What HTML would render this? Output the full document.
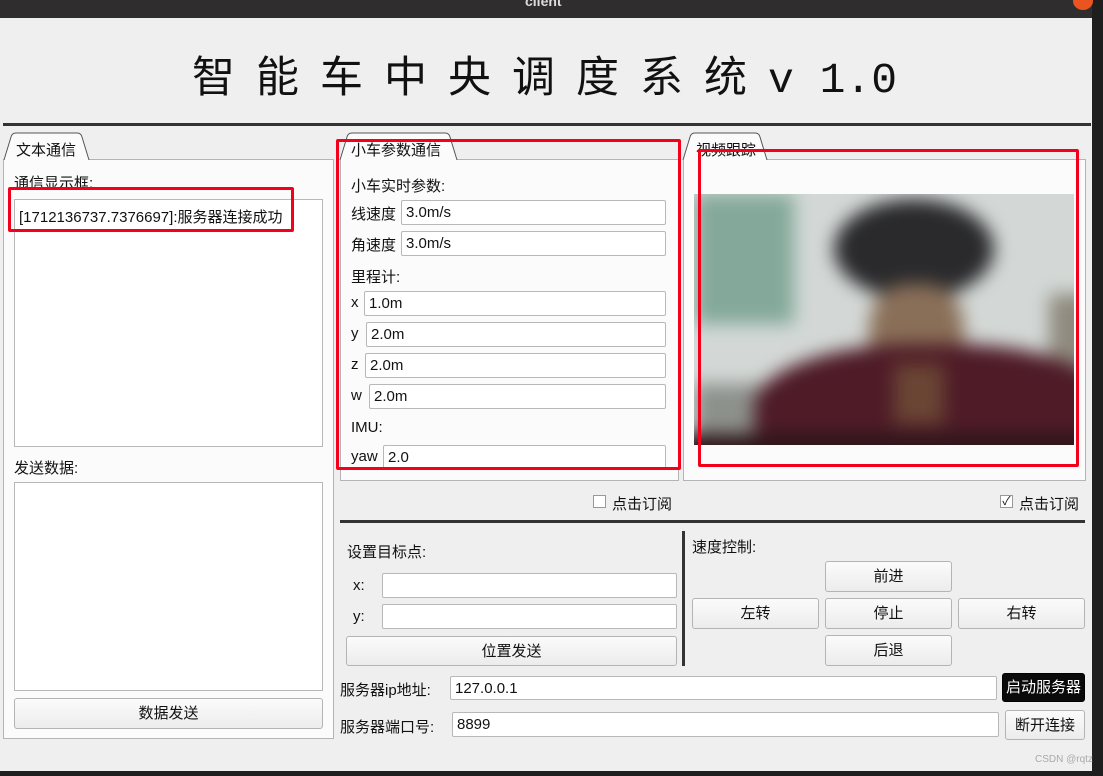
<!DOCTYPE html>
<html><head><meta charset="utf-8"><style>
*{margin:0;padding:0;box-sizing:border-box}
body{width:1103px;height:776px;background:#1e1e1e;position:relative;overflow:hidden;font-family:"Liberation Sans","Noto Sans CJK SC",sans-serif;font-size:15px;color:#111}
.a{position:absolute}
.win{left:0;top:18px;width:1092px;height:753px;background:#efefef}
.tb{left:0;top:0;width:1092px;height:18px;background:#2f2d2d}
.panel{position:absolute;background:#fbfbfb;border:1px solid #b4b4b4}
.in{position:absolute;background:#fff;border:1px solid #b8b8b8;border-radius:2px;padding-left:4px;font-size:15px;display:flex;align-items:center;line-height:1}
.box{position:absolute;background:#fff;border:1px solid #b8b8b8}
.btn{position:absolute;border:1px solid #b4b4b4;border-radius:3px;background:linear-gradient(#fbfbfb,#ececec);font-size:15px;display:flex;align-items:center;justify-content:center;line-height:1}
.lb{position:absolute;font-size:15px;white-space:nowrap}
.red{position:absolute;border:3px solid #f5001a;border-radius:2px}
.tab{position:absolute}
</style></head><body>
<div class="a tb"></div>
<div class="a" style="left:525px;top:-7px;color:#ddd;font-size:14px;font-weight:bold">client</div>
<div class="a" style="left:1073px;top:-8px;width:20px;height:18px;border-radius:50%;background:#e95420"></div>
<div class="a win"></div>
<div class="a" style="left:192px;top:46px;white-space:nowrap;line-height:56px;font-size:43px"><span style="font-family:'Noto Sans CJK SC',sans-serif;letter-spacing:21px">智能车中央调度系统</span><span style="font-family:'Liberation Mono',monospace">v 1.0</span></div>
<div class="a" style="left:3px;top:123px;width:1088px;height:3px;background:#333"></div>

<div class="panel" style="left:3px;top:159px;width:331px;height:580px"></div>
<svg class="tab" style="left:3px;top:131px" width="90" height="30"><path d="M1 29 L8 6 Q9 2 13 2 L74 2 Q78 2 79 6 L86 29" fill="#fbfbfb" stroke="#555" stroke-width="1"/></svg>
<div class="lb" style="left:16px;top:139px">文本通信</div>
<div class="lb" style="left:14px;top:172px">通信显示框:</div>
<div class="box" style="left:14px;top:199px;width:309px;height:248px"></div>
<div class="lb" style="left:19px;top:206px">[1712136737.7376697]:服务器连接成功</div>
<div class="red" style="left:8px;top:187px;width:286px;height:45px"></div>
<div class="lb" style="left:14px;top:457px">发送数据:</div>
<div class="box" style="left:14px;top:482px;width:309px;height:209px"></div>
<div class="btn" style="left:14px;top:698px;width:309px;height:31px">数据发送</div>

<div class="panel" style="left:340px;top:159px;width:339px;height:322px"></div>
<svg class="tab" style="left:339px;top:131px" width="122" height="30"><path d="M1 29 L8 6 Q9 2 13 2 L106 2 Q110 2 111 6 L118 29" fill="#fbfbfb" stroke="#555"/></svg>
<div class="lb" style="left:351px;top:139px">小车参数通信</div>
<div class="lb" style="left:351px;top:175px">小车实时参数:</div>
<div class="lb" style="left:351px;top:203px">线速度</div><div class="in" style="left:401px;top:200px;width:265px;height:25px">3.0m/s</div>
<div class="lb" style="left:351px;top:234px">角速度</div><div class="in" style="left:401px;top:231px;width:265px;height:25px">3.0m/s</div>
<div class="lb" style="left:351px;top:266px">里程计:</div>
<div class="lb" style="left:351px;top:294px">x</div><div class="in" style="left:364px;top:291px;width:302px;height:25px">1.0m</div>
<div class="lb" style="left:351px;top:325px">y</div><div class="in" style="left:366px;top:322px;width:300px;height:25px">2.0m</div>
<div class="lb" style="left:351px;top:356px">z</div><div class="in" style="left:365px;top:353px;width:301px;height:25px">2.0m</div>
<div class="lb" style="left:351px;top:387px">w</div><div class="in" style="left:369px;top:384px;width:297px;height:25px">2.0m</div>
<div class="lb" style="left:351px;top:419px">IMU:</div>
<div class="lb" style="left:351px;top:448px">yaw</div><div class="in" style="left:383px;top:445px;width:283px;height:25px">2.0</div>
<div class="red" style="left:336px;top:139px;width:345px;height:331px"></div>

<div class="panel" style="left:683px;top:159px;width:403px;height:322px"></div>
<svg class="tab" style="left:682px;top:131px" width="90" height="30"><path d="M1 29 L8 6 Q9 2 13 2 L73 2 Q77 2 78 6 L85 29" fill="#fbfbfb" stroke="#555"/></svg>
<div class="lb" style="left:696px;top:139px">视频跟踪</div>
<div class="a" style="left:694px;top:194px;width:380px;height:251px;overflow:hidden;background:#b8bebb">
 <div class="a" style="left:-20px;top:-20px;width:440px;height:300px;filter:blur(9px)">
  <div class="a" style="left:0;top:0;width:440px;height:300px;background:#d3d8d6"></div>
  <div class="a" style="left:20px;top:20px;width:100px;height:130px;background:#84a99b"></div>
  <div class="a" style="left:20px;top:210px;width:110px;height:60px;background:#8d918c"></div>
  <div class="a" style="left:375px;top:120px;width:65px;height:150px;background:#8f8b7f"></div>
  <div class="a" style="left:160px;top:25px;width:160px;height:100px;border-radius:50%;background:#2a2a2c"></div>
  <div class="a" style="left:195px;top:110px;width:95px;height:110px;border-radius:40%;background:#8a6f58"></div>
  <div class="a" style="left:80px;top:170px;width:360px;height:140px;border-radius:45% 45% 0 0;background:#4e1b27"></div>
  <div class="a" style="left:220px;top:190px;width:50px;height:60px;background:#6a4534"></div>
  <div class="a" style="left:0;top:260px;width:440px;height:40px;background:#2e151a"></div>
 </div>
</div>
<div class="red" style="left:698px;top:149px;width:381px;height:318px"></div>

<div class="a" style="left:593px;top:495px;width:13px;height:13px;border:1px solid #999;background:#fff"></div>
<div class="lb" style="left:612px;top:493px">点击订阅</div>
<div class="a" style="left:1000px;top:495px;width:13px;height:13px;border:1px solid #999;background:#fff;font-size:12px;line-height:11px;text-align:center">✓</div>
<div class="lb" style="left:1019px;top:493px">点击订阅</div>
<div class="a" style="left:340px;top:520px;width:745px;height:3px;background:#333"></div>
<div class="a" style="left:682px;top:531px;width:3px;height:135px;background:#333"></div>

<div class="lb" style="left:347px;top:541px">设置目标点:</div>
<div class="lb" style="left:353px;top:577px">x:</div><div class="in" style="left:382px;top:573px;width:295px;height:25px"></div>
<div class="lb" style="left:353px;top:608px">y:</div><div class="in" style="left:382px;top:604px;width:295px;height:25px"></div>
<div class="btn" style="left:346px;top:636px;width:331px;height:30px">位置发送</div>

<div class="lb" style="left:692px;top:536px">速度控制:</div>
<div class="btn" style="left:825px;top:561px;width:127px;height:31px">前进</div>
<div class="btn" style="left:692px;top:598px;width:127px;height:31px">左转</div>
<div class="btn" style="left:825px;top:598px;width:127px;height:31px">停止</div>
<div class="btn" style="left:958px;top:598px;width:127px;height:31px">右转</div>
<div class="btn" style="left:825px;top:635px;width:127px;height:31px">后退</div>

<div class="lb" style="left:340px;top:679px">服务器ip地址:</div>
<div class="in" style="left:450px;top:676px;width:547px;height:24px">127.0.0.1</div>
<div class="btn" style="left:1002px;top:673px;width:83px;height:29px;background:#0a0a0a;color:#fff;border-color:#000">启动服务器</div>
<div class="lb" style="left:340px;top:716px">服务器端口号:</div>
<div class="in" style="left:452px;top:712px;width:547px;height:25px">8899</div>
<div class="btn" style="left:1005px;top:710px;width:80px;height:30px">断开连接</div>
<div class="lb" style="left:1035px;top:754px;font-size:10px;color:#aaa">CSDN @rqtz</div>
</body></html>
